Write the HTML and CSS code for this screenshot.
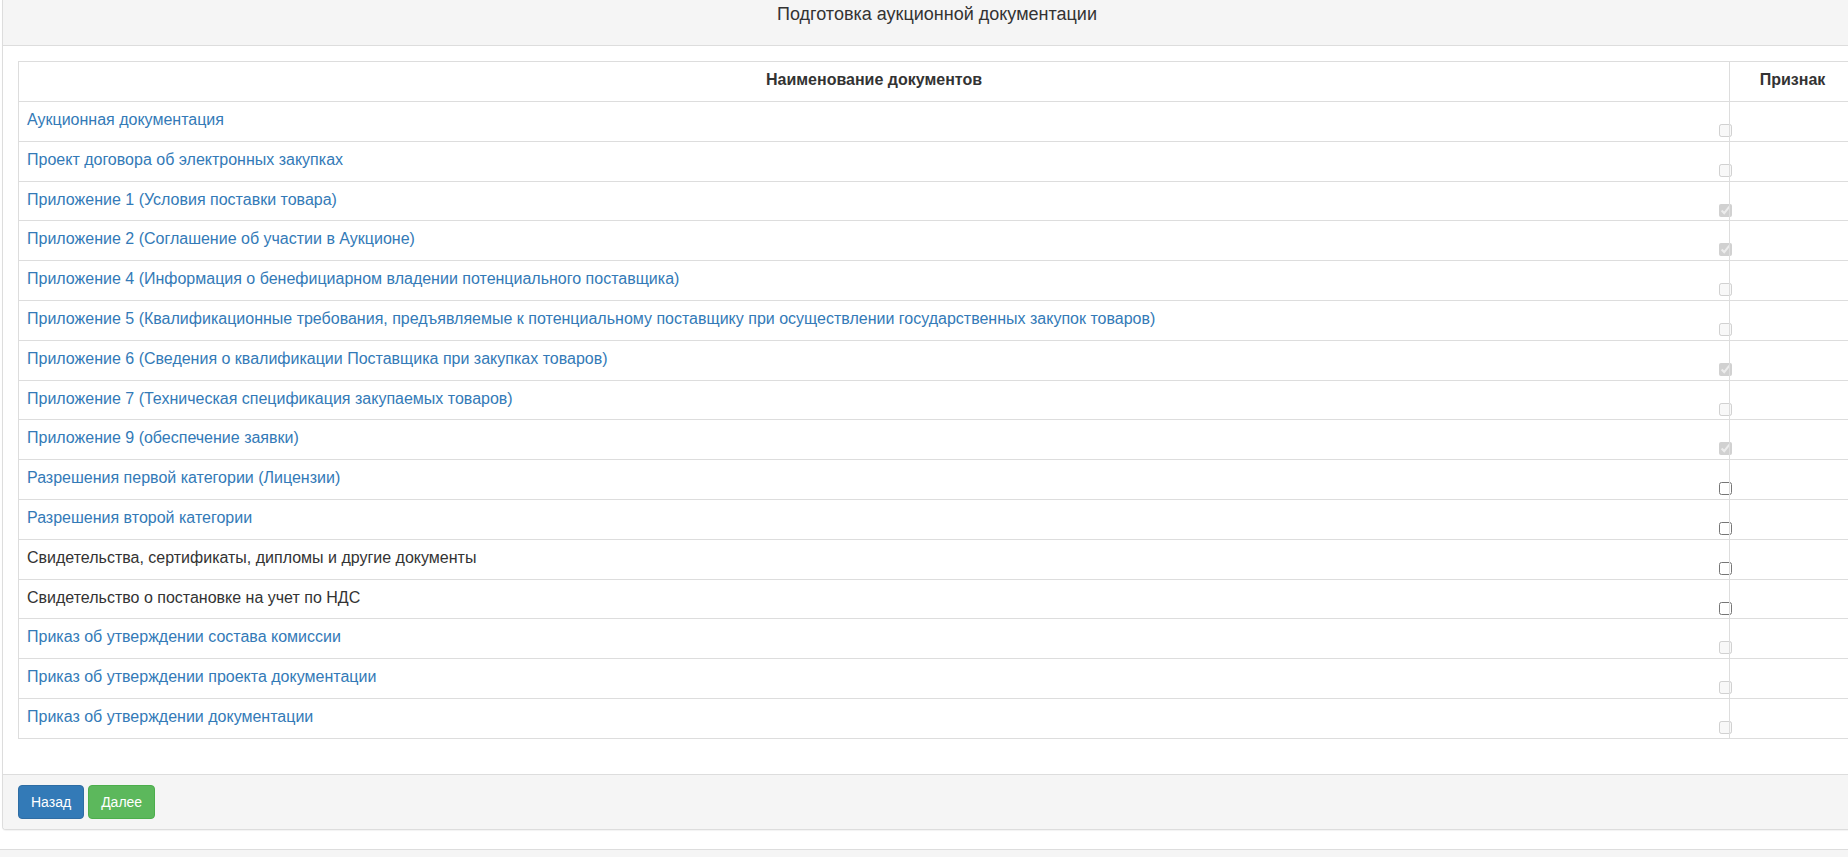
FILE: index.html
```html
<!DOCTYPE html>
<html lang="ru">
<head>
  <meta charset="UTF-8">
  <meta name="viewport" content="width=device-width, initial-scale=1" />
  <title>Подготовка аукционной документации</title>
  <link rel="stylesheet" href="styles.css">
</head>
<body>
  <div class="panel">
    <div class="panel-heading">Подготовка аукционной документации</div>

    <div class="panel-body">
      <table class="docs">
        <colgroup>
          <col>
          <col class="col-sign">
        </colgroup>
        <thead>
          <tr>
            <th>Наименование документов</th>
            <th>Признак</th>
          </tr>
        </thead>
        <tbody>
          <tr>
            <td><a href="#">Аукционная документация</a></td>
            <td class="sign"><input type="checkbox" disabled></td>
          </tr>
          <tr>
            <td><a href="#">Проект договора об электронных закупках</a></td>
            <td class="sign"><input type="checkbox" disabled></td>
          </tr>
          <tr>
            <td><a href="#">Приложение 1 (Условия поставки товара)</a></td>
            <td class="sign"><input type="checkbox" disabled checked></td>
          </tr>
          <tr>
            <td><a href="#">Приложение 2 (Соглашение об участии в Аукционе)</a></td>
            <td class="sign"><input type="checkbox" disabled checked></td>
          </tr>
          <tr>
            <td><a href="#">Приложение 4 (Информация о бенефициарном владении потенциального поставщика)</a></td>
            <td class="sign"><input type="checkbox" disabled></td>
          </tr>
          <tr>
            <td><a href="#">Приложение 5 (Квалификационные требования, предъявляемые к потенциальному поставщику при осуществлении государственных закупок товаров)</a></td>
            <td class="sign"><input type="checkbox" disabled></td>
          </tr>
          <tr>
            <td><a href="#">Приложение 6 (Сведения о квалификации Поставщика при закупках товаров)</a></td>
            <td class="sign"><input type="checkbox" disabled checked></td>
          </tr>
          <tr>
            <td><a href="#">Приложение 7 (Техническая спецификация закупаемых товаров)</a></td>
            <td class="sign"><input type="checkbox" disabled></td>
          </tr>
          <tr>
            <td><a href="#">Приложение 9 (обеспечение заявки)</a></td>
            <td class="sign"><input type="checkbox" disabled checked></td>
          </tr>
          <tr>
            <td><a href="#">Разрешения первой категории (Лицензии)</a></td>
            <td class="sign"><input type="checkbox"></td>
          </tr>
          <tr>
            <td><a href="#">Разрешения второй категории</a></td>
            <td class="sign"><input type="checkbox"></td>
          </tr>
          <tr>
            <td>Свидетельства, сертификаты, дипломы и другие документы</td>
            <td class="sign"><input type="checkbox"></td>
          </tr>
          <tr>
            <td>Свидетельство о постановке на учет по НДС</td>
            <td class="sign"><input type="checkbox"></td>
          </tr>
          <tr>
            <td><a href="#">Приказ об утверждении состава комиссии</a></td>
            <td class="sign"><input type="checkbox" disabled></td>
          </tr>
          <tr>
            <td><a href="#">Приказ об утверждении проекта документации</a></td>
            <td class="sign"><input type="checkbox" disabled></td>
          </tr>
          <tr>
            <td><a href="#">Приказ об утверждении документации</a></td>
            <td class="sign"><input type="checkbox" disabled></td>
          </tr>
        </tbody>
      </table>
    </div>

    <div class="panel-footer">
      <button class="btn btn-primary">Назад</button>
      <button class="btn btn-success">Далее</button>
    </div>
  </div>

  <div class="page-footer"></div>
</body>
</html>
```

FILE: styles.css
```css
html, body {
  overflow-x: hidden;
}

body {
  font-family: "Liberation Sans", Arial, Helvetica, sans-serif;
  font-size: 16px;
  line-height: 20px;
  color: #333;
  background-color: #fff;
  margin: 0;
  padding: 0;
}

.panel {
  width: 1868px;
  margin: 0 0 19px 2px;
  border: 1px solid #ddd;
  border-top: none;
  border-radius: 0 0 4px 4px;
  background-color: #fff;
  box-shadow: 0 1px 1px rgba(0, 0, 0, 0.05);
}

.panel-heading {
  padding: 4px 15px 21px;
  font-size: 18px;
  line-height: 20px;
  text-align: center;
  color: #333;
  background-color: #f5f5f5;
  border-bottom: 1px solid #ddd;
}

.panel-body {
  padding: 15px;
}

.docs {
  width: 100%;
  table-layout: fixed;
  border-collapse: collapse;
  margin-bottom: 20px;
}

.docs .col-sign {
  width: 126px;
}

.docs th,
.docs td {
  border: 1px solid #ddd;
  text-align: left;
  vertical-align: top;
}

.docs th {
  padding: 8px 8px 11px;
  font-weight: bold;
  text-align: center;
}

.docs td {
  padding: 8px 8px 10.8px;
  white-space: nowrap;
}

.docs a {
  color: #337ab7;
  text-decoration: none;
}

.docs td.sign {
  padding: 0;
}

.docs td.sign input {
  display: block;
  width: 13px;
  height: 13px;
  margin: 22px 0 0 -11px;
}

.panel-footer {
  padding: 10px 15px;
  background-color: #f5f5f5;
  border-top: 1px solid #ddd;
  border-radius: 0 0 3px 3px;
  font-size: 0;
}

.btn {
  display: inline-block;
  font-family: "Liberation Sans", Arial, Helvetica, sans-serif;
  font-size: 14px;
  line-height: 20px;
  padding: 6px 12px;
  margin-right: 4px;
  color: #fff;
  border: 1px solid transparent;
  border-radius: 4px;
  cursor: pointer;
}

.btn-primary {
  background-color: #337ab7;
  border-color: #2e6da4;
}

.btn-success {
  background-color: #5cb85c;
  border-color: #4cae4c;
}

.page-footer {
  height: 60px;
  background-color: #f5f5f5;
  border-top: 1px solid #ddd;
}
```
